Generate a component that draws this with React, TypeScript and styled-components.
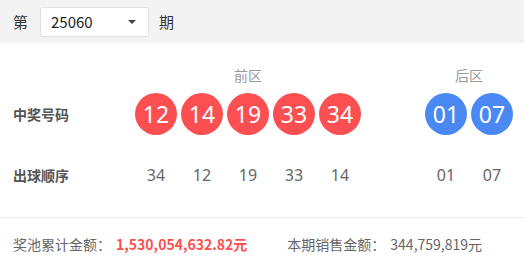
import styled, { createGlobalStyle } from "styled-components";

const GlobalStyle = createGlobalStyle`
  body {
    margin: 0;
    background: #fff;
    font-family: "Noto Sans CJK SC", "Noto Sans", sans-serif;
  }
`;

const FRONT = ["12", "14", "19", "33", "34"];
const BACK = ["01", "07"];
const ORDER_FRONT = ["34", "12", "19", "33", "14"];
const ORDER_BACK = ["01", "07"];

export default function App() {
  return (
    <>
      <GlobalStyle />
      <Toolbar>
        <Word>第</Word>
        <Select>
          <span>25060</span>
          <Caret />
        </Select>
        <Word>期</Word>
      </Toolbar>

      <Board>
        <span />
        <ZoneTitle>前区</ZoneTitle>
        <ZoneTitle $back>后区</ZoneTitle>

        <RowLabel>中奖号码</RowLabel>
        <BallGroup>
          {FRONT.map((n) => (
            <Ball key={n} $color="#fc4f51">{n}</Ball>
          ))}
        </BallGroup>
        <BallGroup $back>
          {BACK.map((n) => (
            <Ball key={n} $color="#4a89f3">{n}</Ball>
          ))}
        </BallGroup>

        <RowLabel $order>出球顺序</RowLabel>
        <BallGroup>
          {ORDER_FRONT.map((n) => (
            <OrderNum key={n}>{n}</OrderNum>
          ))}
        </BallGroup>
        <BallGroup $back>
          {ORDER_BACK.map((n) => (
            <OrderNum key={n}>{n}</OrderNum>
          ))}
        </BallGroup>
      </Board>

      <Footer>
        <Stat>
          奖池累计金额：<Money $hot>1,530,054,632.82元</Money>
        </Stat>
        <Stat>
          本期销售金额：<Money>344,759,819元</Money>
        </Stat>
      </Footer>
    </>
  );
}

const Toolbar = styled.div`
  display: flex;
  align-items: center;
  gap: 12px;
  height: 43px;
  padding-left: 13px;
  background: #f3f3f3;
`;

const Word = styled.span`
  font-size: 15px;
  color: #333;
`;

const Select = styled.div`
  display: flex;
  align-items: center;
  justify-content: space-between;
  box-sizing: border-box;
  width: 109px;
  height: 30px;
  padding: 0 10px;
  margin-right: -2px;
  background: #fff;
  border: 1px solid #e2e2e2;
  border-radius: 2px;
  font-size: 15px;
  color: #222;
`;

const Caret = styled.i`
  width: 0;
  height: 0;
  border-left: 4px solid transparent;
  border-right: 4px solid transparent;
  border-top: 4px solid #444;
  margin-right: 2px;
`;

const Board = styled.div`
  display: grid;
  grid-template-columns: 122px 226px 152px;
  grid-template-rows: 28px 42px 52px;
  padding: 22px 0 30px 13px;
  border-bottom: 1px solid #e9e9e9;
`;

const ZoneTitle = styled.div<{ $back?: boolean }>`
  align-self: start;
  width: ${(p) => (p.$back ? "88px" : "auto")};
  margin-left: ${(p) => (p.$back ? "64px" : "0")};
  text-align: center;
  font-size: 14px;
  line-height: 20px;
  color: #999;
`;

const RowLabel = styled.div<{ $order?: boolean }>`
  display: flex;
  align-items: center;
  align-self: ${(p) => (p.$order ? "end" : "stretch")};
  height: ${(p) => (p.$order ? "24px" : "auto")};
  font-size: 14px;
  font-weight: 700;
  color: #555;
`;

const BallGroup = styled.div<{ $back?: boolean }>`
  display: flex;
  align-items: flex-end;
  gap: 4px;
  margin-left: ${(p) => (p.$back ? "64px" : "0")};
`;

const Ball = styled.div<{ $color: string }>`
  display: flex;
  align-items: center;
  justify-content: center;
  width: 42px;
  height: 42px;
  border-radius: 50%;
  background: ${(p) => p.$color};
  color: #fff;
  font-family: "Noto Sans", sans-serif;
  font-size: 23px;
`;

const OrderNum = styled.div`
  width: 42px;
  text-align: center;
  font-family: "Noto Sans", sans-serif;
  font-size: 16px;
  line-height: 24px;
  color: #666;
`;

const Footer = styled.div`
  display: flex;
  gap: 40px;
  padding: 16px 13px 0;
`;

const Stat = styled.div`
  font-size: 14px;
  line-height: 20px;
  color: #666;
  white-space: nowrap;
`;

const Money = styled.span<{ $hot?: boolean }>`
  margin-left: 5px;
  font-weight: ${(p) => (p.$hot ? 700 : 400)};
  color: ${(p) => (p.$hot ? "#fc4f51" : "#666")};
`;
